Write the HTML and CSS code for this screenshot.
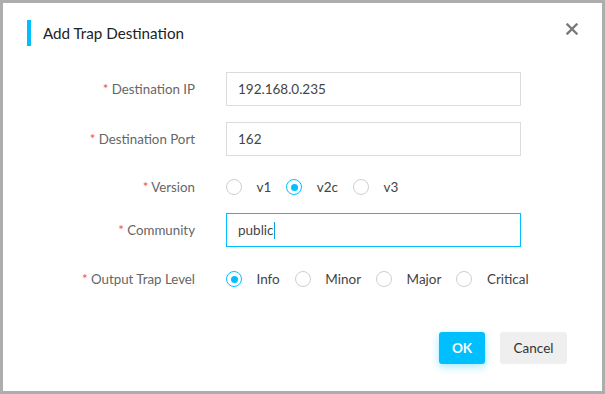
FILE: index.html
```html
<!DOCTYPE html>
<html lang="en">
  <head>
    <meta charset="UTF-8" />
    <meta name="viewport" content="width=device-width, initial-scale=1.0" />
    <title>Add Trap Destination</title>
    <link rel="stylesheet" href="styles.css">
  </head>
  <body>
    <div class="dialog">
      <div class="dialog-header">
        <span class="dialog-title">Add Trap Destination</span>
        <svg class="dialog-close" width="12" height="12" viewBox="0 0 12 12">
          <path d="M1.5 1.5 L10.5 10.5 M10.5 1.5 L1.5 10.5" stroke="#7a7a7a" stroke-width="2.4" stroke-linecap="square" />
        </svg>
      </div>
      <div class="dialog-body">
        <div class="form-item">
          <label class="form-label"><i>*</i> Destination IP</label>
          <div class="input">192.168.0.235</div>
        </div>
        <div class="form-item">
          <label class="form-label"><i>*</i> Destination Port</label>
          <div class="input">162</div>
        </div>
        <div class="form-item radio-row">
          <label class="form-label"><i>*</i> Version</label>
          <div class="radio-group">
            <span class="radio"></span><span class="radio-text">v1</span>
            <span class="radio checked"></span><span class="radio-text">v2c</span>
            <span class="radio"></span><span class="radio-text">v3</span>
          </div>
        </div>
        <div class="form-item">
          <label class="form-label"><i>*</i> Community</label>
          <div class="input focus">public<span class="caret"></span></div>
        </div>
        <div class="form-item radio-row last">
          <label class="form-label"><i>*</i> Output Trap Level</label>
          <div class="radio-group">
            <span class="radio checked"></span><span class="radio-text">Info</span>
            <span class="radio"></span><span class="radio-text">Minor</span>
            <span class="radio"></span><span class="radio-text">Major</span>
            <span class="radio"></span><span class="radio-text">Critical</span>
          </div>
        </div>
      </div>
      <div class="dialog-footer">
        <button class="btn btn-primary">OK</button>
        <button class="btn">Cancel</button>
      </div>
    </div>
  </body>
</html>
```

FILE: styles.css
```css
body {
  margin: 0;
  padding: 0;
  background-color: #adadad;
  font-family: Lato, "Noto Sans", sans-serif;
}

.dialog {
  margin: 3px;
  width: 599px;
  height: 388px;
  background-color: #fff;
  box-sizing: border-box;
}

.dialog-header {
  position: relative;
  display: flex;
  align-items: center;
  padding: 17px 0 0 24px;
  height: 26px;
}
.dialog-title {
  border-left: 4px solid #00bfff;
  padding-left: 12px;
  height: 26px;
  line-height: 26px;
  font-size: 15.2px;
  color: #222;
}
.dialog-close {
  position: absolute;
  right: 24px;
  top: 20px;
}

.dialog-body {
  padding-top: 26px;
}

.form-item {
  display: flex;
  align-items: center;
  height: 34px;
  margin-bottom: 16px;
}
.form-item.radio-row {
  height: 30px;
  margin-bottom: 11px;
}
.form-item.radio-row.last {
  height: 32px;
  margin-bottom: 0;
}

.form-label {
  width: 192px;
  padding-right: 31px;
  text-align: right;
  font-size: 13.3px;
  color: #666;
}
.form-label i {
  font-style: normal;
  color: #f0504f;
}

.input {
  width: 295px;
  height: 34px;
  box-sizing: border-box;
  border: 1px solid #dcdcdc;
  padding: 0 11px;
  line-height: 32px;
  font-size: 13.5px;
  color: #444;
}
.input.focus {
  border-color: #00bfff;
}
.caret {
  display: inline-block;
  width: 1px;
  height: 17px;
  background-color: #0a9fe0;
  vertical-align: middle;
  margin-top: -2px;
}

.radio-group {
  display: flex;
  align-items: center;
}
.radio {
  width: 16px;
  height: 16px;
  box-sizing: border-box;
  border: 1px solid #cfcfcf;
  border-radius: 50%;
  position: relative;
}
.radio.checked {
  border-color: #00bfff;
}
.radio.checked::after {
  content: "";
  position: absolute;
  left: 3.5px;
  top: 3.5px;
  width: 7px;
  height: 7px;
  border-radius: 50%;
  background-color: #00bfff;
}
.radio-text {
  margin: 0 15px 0 14.5px;
  font-size: 13.5px;
  color: #444;
}

.dialog-footer {
  display: flex;
  justify-content: flex-end;
  gap: 15px;
  padding: 37px 35px 0 0;
}
.btn {
  height: 32px;
  width: 67px;
  padding: 0;
  border: none;
  border-radius: 3px;
  background-color: #efefef;
  font-family: Lato, "Noto Sans", sans-serif;
  font-size: 13.5px;
  color: #333;
}
.btn-primary {
  background-color: #00bfff;
  color: #fff;
  font-weight: bold;
  width: 46px;
  box-shadow: 0 3px 8px rgba(0, 191, 255, 0.35);
}
```
